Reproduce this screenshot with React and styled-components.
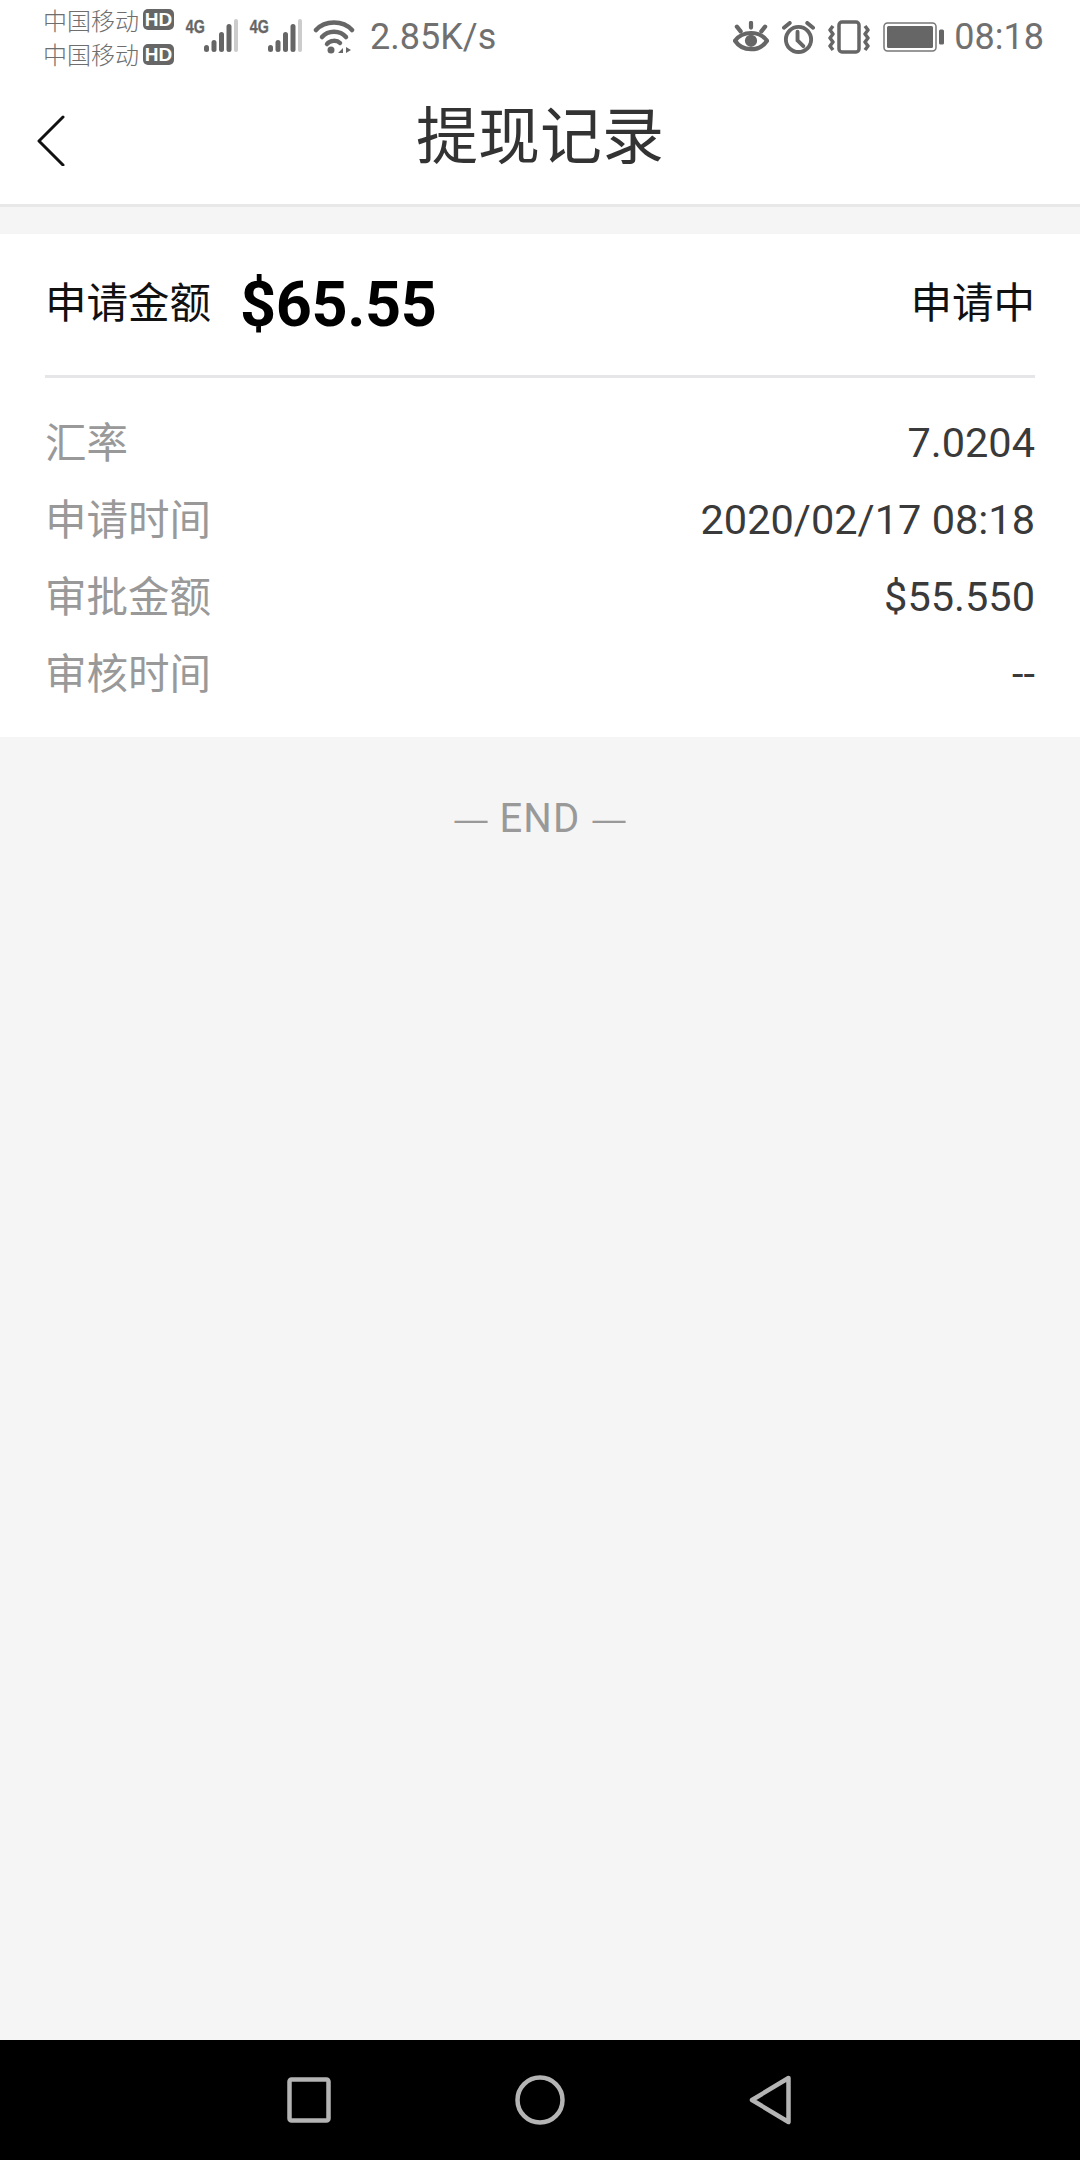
import styled, { createGlobalStyle } from 'styled-components';

const GlobalStyle = createGlobalStyle`
  html, body {
    margin: 0;
    padding: 0;
    background: #f5f5f5;
  }
`;

const cjk = '"Noto Sans CJK SC", sans-serif';

const Page = styled.div`
  width: 1080px;
  height: 2160px;
  display: flex;
  flex-direction: column;
  background: #f5f5f5;
  font-family: Roboto, "Noto Sans CJK SC", sans-serif;
  overflow: hidden;
`;

const StatusBar = styled.div`
  height: 74px;
  flex: none;
  background: #fff;
  color: #666;
  display: flex;
  align-items: center;
  justify-content: space-between;
  padding: 0 36px 0 43px;
  box-sizing: border-box;
`;

const StatusGroup = styled.div`
  display: flex;
  align-items: center;
  gap: ${(p) => p.$gap || 0}px;
`;

const Carriers = styled.div`
  display: flex;
  flex-direction: column;
  gap: 8.5px;
`;

const Carrier = styled.div`
  display: flex;
  align-items: center;
  gap: 4px;
  height: 26px;
  font-family: ${cjk};
  font-size: 24px;
  font-weight: 300;
  line-height: 26px;
  color: #6e6e6e;
`;

const HdBadge = styled.span`
  width: 31px;
  height: 21px;
  border-radius: 5px;
  background: #666;
  color: #fff;
  font-family: "Liberation Sans", sans-serif;
  font-size: 19px;
  font-weight: 700;
  line-height: 21px;
  text-align: center;
`;

const Speed = styled.span`
  margin-left: 4px;
  font-size: 36px;
  color: #707070;
  font-weight: 400;
`;

const Clock = styled.span`
  margin-left: -3px;
  font-size: 36px;
  color: #707070;
  font-weight: 400;
`;

const TitleBar = styled.div`
  height: 130px;
  flex: none;
  background: #fff;
  border-bottom: 3px solid #e8e8e8;
  position: relative;
  display: flex;
  align-items: center;
  justify-content: center;
`;

const BackButton = styled.div`
  position: absolute;
  left: 36px;
  top: 40px;
  width: 30px;
  height: 52px;
`;

const Title = styled.h1`
  margin: -14px 0 0;
  font-family: ${cjk};
  font-size: 62px;
  font-weight: 400;
  color: #333;
  line-height: 1;
`;

const Card = styled.div`
  margin-top: 27px;
  background: #fff;
  padding: 0 45px;
  height: 503px;
  box-sizing: border-box;
  flex: none;
`;

const CardHead = styled.div`
  height: 141px;
  display: flex;
  align-items: center;
  justify-content: space-between;
  border-bottom: 3px solid #e6e6e8;
`;

const AmountGroup = styled.div`
  display: flex;
  align-items: center;
  gap: 29px;
`;

const AmountLabel = styled.span`
  margin-top: -8px;
  font-family: ${cjk};
  font-size: 41.5px;
  line-height: 1;
  color: #111;
`;

const Amount = styled.span`
  font-size: 63px;
  font-weight: 700;
  letter-spacing: -0.4px;
  line-height: 1;
  color: #000;
`;

const State = styled.span`
  margin-top: -8px;
  font-family: ${cjk};
  font-size: 41.5px;
  line-height: 1;
  color: #111;
`;

const Rows = styled.div`
  padding-top: 25px;
  display: flex;
  flex-direction: column;
`;

const Row = styled.div`
  height: 77px;
  display: flex;
  align-items: center;
  justify-content: space-between;
`;

const RowLabel = styled.span`
  margin-top: -1px;
  font-family: ${cjk};
  font-size: 41.5px;
  line-height: 1;
  color: #999;
`;

const RowValue = styled.span`
  margin-top: 3px;
  font-size: 41.5px;
  line-height: 1;
  color: #3a3a3a;
`;

const EndMark = styled.div`
  margin-top: 56px;
  display: flex;
  align-items: center;
  justify-content: center;
  gap: 12px;
  font-size: 40px;
  line-height: 52px;
  color: #999;
  letter-spacing: 1.2px;
`;

const EndDash = styled.span`
  font-family: "Liberation Sans", sans-serif;
  font-size: 33px;
  letter-spacing: 0;
`;

const NavBar = styled.div`
  margin-top: auto;
  height: 120px;
  flex: none;
  background: #000;
  display: flex;
  align-items: center;
  justify-content: center;
  gap: 184px;
`;

const NavIcon = styled.svg`
  display: block;
  fill: none;
  stroke: #b4b4b4;
  stroke-width: 4.5;
  stroke-linejoin: round;
`;

const SignalIcon = () => (
  <svg width="53" height="40" viewBox="0 0 53 40" fill="#666">
    <text x="1" y="15.5" fontFamily="Liberation Sans, sans-serif" fontSize="19" fontWeight="700" stroke="#666" strokeWidth="0.4" transform="scale(0.75 1)">4G</text>
    <rect x="19" y="28" width="5" height="7" rx="2.5" />
    <rect x="26.5" y="23" width="5" height="12" rx="2.5" />
    <rect x="34" y="15" width="5" height="20" rx="2.5" />
    <rect x="41.5" y="7" width="5" height="28" rx="2.5" />
    <rect x="49" y="2" width="4" height="33" rx="2" fill="#ccc" />
  </svg>
);

const WifiIcon = () => (
  <svg width="42" height="36" viewBox="0 0 42 36" fill="none" stroke="#666" strokeWidth="4.5" strokeLinecap="round">
    <path d="M3 11C12 1 30 1 39 11" />
    <path d="M9 18C15 11 27 11 33 18" />
    <path d="M14 25C17 21 24 21 27 24" />
    <circle cx="18" cy="31" r="3.5" fill="#666" stroke="none" />
    <path d="M25 34l5-5v5zM33 28v6l5-3z" fill="#666" stroke="none" />
  </svg>
);

const EyeIcon = () => (
  <svg width="36" height="32" viewBox="0 0 38 34" fill="none" stroke="#666" strokeWidth="4.5" strokeLinecap="round">
    <path d="M2 21C10 10 28 10 36 21C28 33 10 33 2 21Z" />
    <circle cx="19" cy="21" r="6.5" fill="#666" stroke="none" />
    <path d="M19 2v5M4 6l4 5M34 6l-4 5" />
  </svg>
);

const AlarmIcon = () => (
  <svg width="33" height="33" viewBox="0 0 34 34" fill="none" stroke="#666" strokeWidth="4" strokeLinecap="round">
    <circle cx="17" cy="19" r="13" />
    <path d="M16 11v9l6 6" />
    <path d="M2 7l6-5M32 7l-6-5" />
  </svg>
);

const VibrateIcon = () => (
  <svg width="42" height="34" viewBox="0 0 42 34" fill="none" stroke="#666" strokeWidth="3.5" strokeLinejoin="round">
    <rect x="11" y="2" width="20" height="30" rx="3" />
    <path d="M5 6l-3 4 3 4-3 4 3 4-3 4 3 4" />
    <path d="M37 6l3 4-3 4 3 4-3 4 3 4-3 4" />
  </svg>
);

const BatteryIcon = () => (
  <svg width="61" height="30" viewBox="0 0 61 30">
    <rect x="1" y="1" width="52" height="28" rx="3.5" fill="none" stroke="#777" strokeWidth="1.5" />
    <rect x="4" y="4" width="46" height="22" rx="1.5" fill="#666" />
    <rect x="56" y="7.5" width="5" height="15" rx="1.5" fill="#666" />
  </svg>
);

const detailRows = [
  { label: '汇率', value: '7.0204' },
  { label: '申请时间', value: '2020/02/17 08:18' },
  { label: '审批金额', value: '$55.550' },
  { label: '审核时间', value: '--' },
];

export default function App() {
  return (
    <Page>
      <GlobalStyle />
      <StatusBar>
        <StatusGroup $gap={11}>
          <Carriers>
            <Carrier>中国移动<HdBadge>HD</HdBadge></Carrier>
            <Carrier>中国移动<HdBadge>HD</HdBadge></Carrier>
          </Carriers>
          <SignalIcon />
          <SignalIcon />
          <WifiIcon />
          <Speed>2.85K/s</Speed>
        </StatusGroup>
        <StatusGroup $gap={13}>
          <EyeIcon />
          <AlarmIcon />
          <VibrateIcon />
          <BatteryIcon />
          <Clock>08:18</Clock>
        </StatusGroup>
      </StatusBar>
      <TitleBar>
        <BackButton>
          <svg width="30" height="52" viewBox="0 0 30 52" fill="none" stroke="#111" strokeWidth="3" strokeLinecap="round" strokeLinejoin="round">
            <path d="M27 3L3 27L27 51" />
          </svg>
        </BackButton>
        <Title>提现记录</Title>
      </TitleBar>
      <Card>
        <CardHead>
          <AmountGroup>
            <AmountLabel>申请金额</AmountLabel>
            <Amount>$65.55</Amount>
          </AmountGroup>
          <State>申请中</State>
        </CardHead>
        <Rows>
          {detailRows.map((row) => (
            <Row key={row.label}>
              <RowLabel>{row.label}</RowLabel>
              <RowValue>{row.value}</RowValue>
            </Row>
          ))}
        </Rows>
      </Card>
      <EndMark>
        <EndDash>—</EndDash>
        <span>END</span>
        <EndDash>—</EndDash>
      </EndMark>
      <NavBar>
        <NavIcon width="44" height="46" viewBox="0 0 44 46">
          <rect x="2.5" y="2.5" width="39" height="41" rx="2" />
        </NavIcon>
        <NavIcon width="50" height="50" viewBox="0 0 50 50">
          <circle cx="25" cy="25" r="22.5" />
        </NavIcon>
        <NavIcon width="44" height="50" viewBox="0 0 44 50">
          <path d="M39.5 3L3 25L39.5 47Z" />
        </NavIcon>
      </NavBar>
    </Page>
  );
}
